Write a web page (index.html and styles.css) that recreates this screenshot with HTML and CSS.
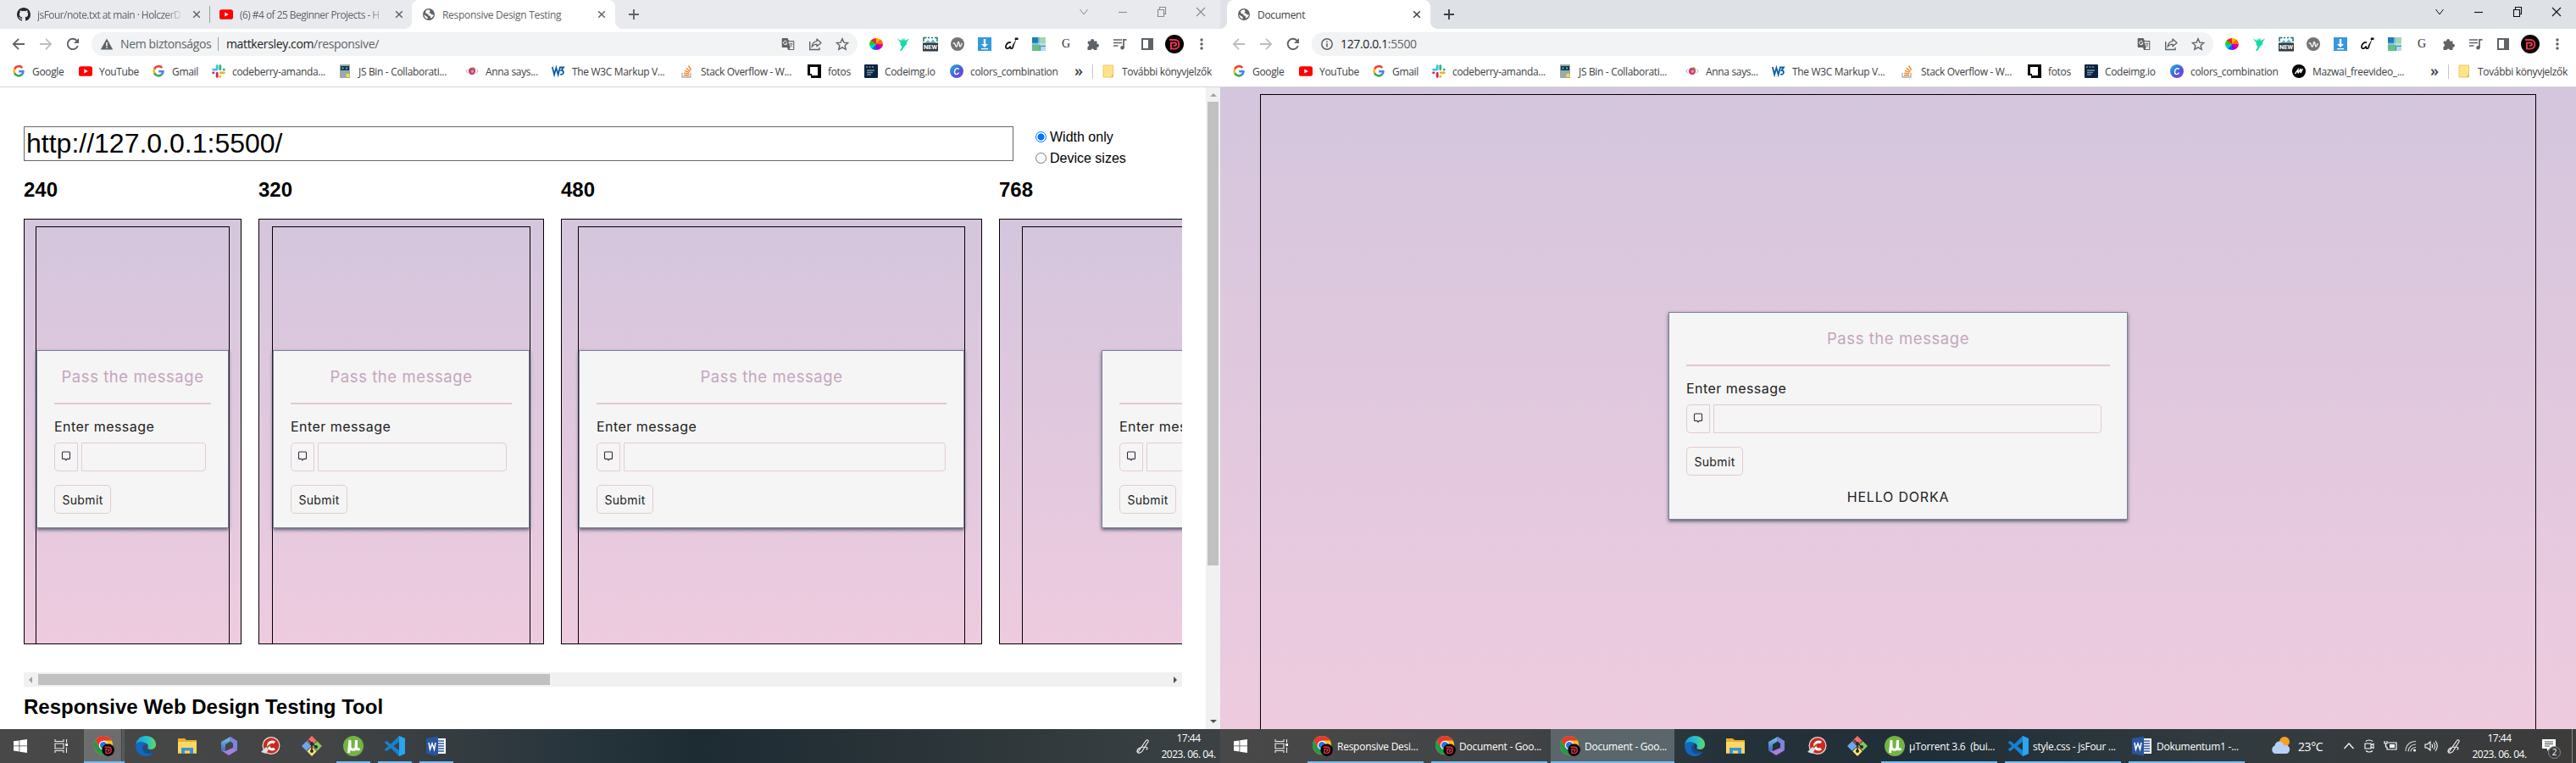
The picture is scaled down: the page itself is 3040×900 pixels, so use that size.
FILE: index.html
```html
<!DOCTYPE html>
<html lang="hu">
<head>
<meta charset="utf-8">
<title>Responsive Design Testing</title>
<link rel="stylesheet" href="styles.css">
</head>
<body>
<svg class="sprite" aria-hidden="true">
  <symbol id="github" viewBox="0 0 16 16"><path fill="#24292f" d="M8 0C3.58 0 0 3.58 0 8c0 3.54 2.29 6.53 5.47 7.59.4.07.55-.17.55-.38 0-.19-.01-.82-.01-1.49-2.01.37-2.53-.49-2.69-.94-.09-.23-.48-.94-.82-1.13-.28-.15-.68-.52-.01-.53.63-.01 1.08.58 1.23.82.72 1.21 1.87.87 2.33.66.07-.52.28-.87.51-1.07-1.78-.2-3.64-.89-3.64-3.95 0-.87.31-1.59.82-2.15-.08-.2-.36-1.02.08-2.12 0 0 .67-.21 2.2.82a7.6 7.6 0 0 1 4 0c1.53-1.04 2.2-.82 2.2-.82.44 1.1.16 1.92.08 2.12.51.56.82 1.27.82 2.15 0 3.07-1.87 3.75-3.65 3.95.29.25.54.73.54 1.48 0 1.07-.01 1.93-.01 2.2 0 .21.15.46.55.38A8 8 0 0 0 16 8c0-4.42-3.58-8-8-8z"/></symbol>
  <symbol id="youtube" viewBox="0 0 16 16"><rect y="2.2" width="16" height="11.6" rx="2.6" fill="#f00"/><path d="M6.3 5.4v5.2L10.8 8z" fill="#fff"/></symbol>
  <symbol id="globe" viewBox="0 0 16 16"><circle cx="8" cy="8" r="7" fill="#5f6368"/><path d="M8.600 2.200c-1.800 0-3.500.8-4.600 2.200l.6 2.400 2.600 1 .6 1.700 2 .3.200 2.600c2-.6 3.400-2 3.900-4l-2.200-.2-1.500-1.500-2.200-.4 1.700-1.600zM2.300 8.200c.2 2.600 1.800 4.600 4.200 5.300l.2-2.200-1.900-1.200z" fill="#fff"/></symbol>
  <symbol id="close" viewBox="0 0 16 16"><path d="m4.200 4.200 7.600 7.600m0-7.600-7.600 7.600" stroke="currentColor" stroke-width="1.500"/></symbol>
  <symbol id="plus" viewBox="0 0 16 16"><path d="M8 2v12M2 8h12" stroke="currentColor" stroke-width="1.900"/></symbol>
  <symbol id="back" viewBox="0 0 16 16"><path d="M15 8H2.200M8 1.800 1.800 8 8 14.200" fill="none" stroke="currentColor" stroke-width="1.800"/></symbol>
  <symbol id="forward" viewBox="0 0 16 16"><path d="M1 8h12.800M8 1.800 14.200 8 8 14.200" fill="none" stroke="currentColor" stroke-width="1.800"/></symbol>
  <symbol id="reload" viewBox="0 0 16 16"><path d="M13.800 10A6.200 6.200 0 1 1 12.400 3.600L14 5.400" fill="none" stroke="currentColor" stroke-width="1.900"/><path d="M15 1v6H9z" fill="currentColor"/></symbol>
  <symbol id="warning" viewBox="0 0 16 16"><path d="M8 1.500 15.200 14.500H.8z" fill="#5f6368"/><path d="M8 6v4.400M8 11.500v1.600" stroke="#fff" stroke-width="1.500"/></symbol>
  <symbol id="info" viewBox="0 0 16 16"><circle cx="8" cy="8" r="6.200" fill="none" stroke="#5f6368" stroke-width="1.500"/><path d="M8 7.200v4.200M8 4.400V6" stroke="#5f6368" stroke-width="1.600"/></symbol>
  <symbol id="translate" viewBox="0 0 16 16"><path d="M1 1h6.500L9 4h5.500c.5 0 .8.300.8.800v9.500c0 .5-.3.800-.8.800H8L7 12H1.500c-.5 0-.8-.3-.8-.8V1.800z" fill="#5f6368"/><path d="M9.500 5.200h4.700v8.700H9.700l1-1.900-2.300-7z" fill="#f1f3f4"/><path d="M9.500 7.500h4M11.500 6.500v1M10.300 8l2.700 3.500M13 8l-2.500 3.500" fill="none" stroke="#85888c"/><path d="M6.500 5A2.200 2.200 0 1 0 7 7H5" fill="none" stroke="#fff"/></symbol>
  <symbol id="share" viewBox="0 0 16 16"><path d="M1.700 5v9.500H13V12" fill="none" stroke="#5f6368" stroke-width="1.400"/><path d="M10 2l5 4.400-5 4.400V8.200C7 8.200 5.200 9.500 4 11.500 4.400 7.600 6.500 5 10 4.600z" fill="none" stroke="#5f6368" stroke-width="1.300" stroke-linejoin="round"/></symbol>
  <symbol id="star" viewBox="0 0 16 16"><path d="m8 1.700 1.900 4.400 4.800.4-3.600 3.200 1.100 4.700L8 11.900l-4.200 2.500 1.100-4.700L1.300 6.500l4.800-.4z" fill="none" stroke="#5f6368" stroke-width="1.400"/></symbol>
  <symbol id="hummingbird" viewBox="0 0 16 16"><path d="M1 1.500 5.500 4 7 1l.5 3L9 .5 10 4l5-2.500L12 6c.6 2-.2 3-2 4l-4 6H4l2.500-5C4.500 9 4 8 5 7z" fill="#15dda5"/></symbol>
  <symbol id="newshot" viewBox="0 0 18 18"><path d="M1 6V1.500h3.500M6 1.500h2M10 1.500h2M14 1.500h3V6" fill="none" stroke="#19756f" stroke-width="1.500"/><path d="M3 7.500 6 4l3 3 3-3.500 3.500 4z" fill="#5cbccb"/><rect y="7.500" width="18" height="10" fill="#303a43"/><path d="M0 0" /></symbol>
  <symbol id="wave" viewBox="0 0 16 16"><circle cx="8" cy="8" r="8" fill="#747474"/><path d="M2.800 7.500C5 4 5.500 12 7 11s.8-5.500 2-5.500 1 5.500 2 5.500 1.400-2 2.300-4" fill="none" stroke="#fff" stroke-width="1.300"/></symbol>
  <symbol id="download" viewBox="0 0 16 16"><path fill="#3698dc" d="M0 0h16v16H0z"/><path d="M6.800 2h2.400v6H12l-4 4-4-4h2.800zM4 13h8v1.200H4z" fill="#fff"/></symbol>
  <symbol id="brush" viewBox="0 0 16 16"><path d="M7 6.500C5 4.500.5 8 1 11.500 1.500 14.500 5 13 6.500 10.500c-.5 2.500.3 3 2 2.500" fill="none" stroke="#111" stroke-width="1.800"/><path d="m14 1-3.500 9c0 3-1.500 4-3.500 4 1.500-1 1.500-2 1.800-4.500z" fill="#111"/><path d="M12 .6h3.500v2.500h-4z" fill="#111"/></symbol>
  <symbol id="map" viewBox="0 0 16 16"><path fill="#2d97c7" d="M0 0h16v16H0z"/><path fill="#1d7ebb" d="M0 0h9v6H0z"/><path fill="#9fd7b6" d="M9 0h7v10H9z"/><path fill="#67bf86" d="M0 9h9v7H0z"/><path fill="#b4d8ee" d="M10 11h6v5h-6z"/><path d="M0 8h8V0M8 8h8" fill="none" stroke="#dceef3"/></symbol>
  <symbol id="puzzle" viewBox="0 0 16 16"><path d="M2 4.500h3.200a2 2 0 1 1 3.800 0h3.500v3.300a2 2 0 1 1 0 3.900V15H9.200a2 2 0 0 0-3.900 0H1.500v-3.800a2 2 0 0 0 0-3.900z" fill="#5f6368"/></symbol>
  <symbol id="playlist" viewBox="0 0 16 16"><path d="M0 3h10M0 6.500h10M0 10h5.500M12 12V2.800h3.500" fill="none" stroke="#5f6368" stroke-width="1.700"/><circle cx="10.500" cy="12.200" r="2.200" fill="#5f6368"/></symbol>
  <symbol id="panel" viewBox="0 0 16 16"><path fill="#5f6368" fill-rule="evenodd" d="M1 1h14v14H1zM3 3v10h6V3z"/></symbol>
  <symbol id="dee" viewBox="0 0 22 22"><circle cx="11" cy="11" r="11" fill="#080405"/><path d="M5 6h6.500c6.500 0 6.500 10.500 0 10.500H7V9.500h4c2.800 0 2.800 3.500 0 3.500h-1" fill="none" stroke="#e2354d" stroke-width="2"/></symbol>
  <symbol id="dots" viewBox="0 0 16 16"><g fill="#5f6368"><circle cx="8" cy="3" r="1.700"/><circle cx="8" cy="8" r="1.700"/><circle cx="8" cy="13" r="1.700"/></g></symbol>
  <symbol id="google" viewBox="0 0 16 16"><g fill="none" stroke-width="2.600"><path d="M12.300 4A5.400 5.400 0 0 0 3.200 5.600" stroke="#ea4335"/><path d="M3.200 5.500a5.400 5.400 0 0 0 0 5" stroke="#fbbc05"/><path d="M3.200 10.400a5.400 5.400 0 0 0 8.400 1.700" stroke="#34a853"/><path d="M11.500 12.200A5 5 0 0 0 13.400 8.200H8.200" stroke="#4285f4"/></g></symbol>
  <symbol id="slack" viewBox="0 0 16 16"><g stroke-width="2.800" stroke-linecap="round"><path d="M6.200 1.600v4M1.600 6.200h4" stroke="#36c5f0"/><path d="M9.800 1.600v4.200M14.400 6.200h-.2" stroke="#2eb67d"/><path d="M9.800 14.400v-.2M10.200 9.800h4.200" stroke="#ecb22e"/><path d="M6.200 14.400v-4M1.600 9.800h.4" stroke="#e01e5a"/></g></symbol>
  <symbol id="jsbin" viewBox="0 0 16 16"><path fill="#9aa9ad" d="M2 0h12v16H2z"/><path fill="#18343d" d="M3 2h10v5H3z"/><path fill="#36c7de" d="M4.500 3.500h2v2h-2zM9 3.500h2v2H9z"/><path fill="#f4db42" d="M9.500 11h4v4h-4z"/></symbol>
  <symbol id="anna" viewBox="0 0 16 16"><path d="M3 5.500.8 8 3 10.500M13 5.500 15.200 8 13 10.500" fill="none" stroke="#aaa"/><circle cx="8" cy="8" r="4.200" fill="#cf3f77"/><path d="M8 4c2-1 3 0 4 1-1 2-3 2-4 1z" fill="#9b7a38"/><circle cx="8.500" cy="8.300" r="1.500" fill="#eba0bb"/></symbol>
  <symbol id="w3" viewBox="0 0 16 16"><path d="m.8 3 2.300 9L5.400 4l2.300 8L10 3M9.500 3.500H14L11.500 7c4 0 2.700 6.200-1.500 4.500" fill="none" stroke="#0b5fa0" stroke-width="1.800"/></symbol>
  <symbol id="so" viewBox="0 0 16 16"><path d="M2 10v5h10v-5" fill="none" stroke="#aaa" stroke-width="1.300"/><path d="M4 12.700h6.200M4.200 10.300l6 .6M5 7.400l5.600 2M6.800 4.200l4.700 4M9.500 1.500l3.300 5.200" stroke="#f48024" stroke-width="1.400"/></symbol>
  <symbol id="fotos" viewBox="0 0 16 16"><path fill="#050505" fill-rule="evenodd" d="M0 0h16v16H4v-3H0zM3 3v8h2v2h7V3z"/></symbol>
  <symbol id="codeimg" viewBox="0 0 16 16"><rect width="16" height="16" rx="1" fill="#082440"/><path d="M2 3h2m1.500 0h2M9 3h2M3 7h9M3 9.500h7M3 12h5" stroke="#76909f" stroke-width="1.300"/></symbol>
  <symbol id="canva" viewBox="0 0 16 16"><linearGradient id="cg" x2="1" y2="1"><stop stop-color="#18b9d2"/><stop offset=".6" stop-color="#5354df"/><stop offset="1" stop-color="#8042df"/></linearGradient><circle cx="8" cy="8" r="8" fill="url(#cg)"/><path d="M10.500 5.700C9.500 3.500 5.500 5 5.500 8.700s3.500 3.800 5 1" fill="none" stroke="#fff" stroke-width="1.400"/></symbol>
  <symbol id="mazwai" viewBox="0 0 16 16"><circle cx="8" cy="8" r="8" fill="#000"/><path d="m3.500 11 3.500-5v4.500L10 5v5l2.500-5" fill="none" stroke="#fff" stroke-width="1.400"/></symbol>
  <symbol id="folder" viewBox="0 0 16 16"><path d="M2 1h11.500v14H2z" fill="#ffe38b" stroke="#edc95f"/><path d="m11 15 2.500-4v4z" fill="#e0b94b"/></symbol>
  <symbol id="w-down" viewBox="0 0 12 12"><path d="m1.500 3 4.500 6 4.500-6" fill="none" stroke="currentColor"/></symbol>
  <symbol id="w-min" viewBox="0 0 12 12"><path d="M1 6.500h10" stroke="currentColor" stroke-width="1.100"/></symbol>
  <symbol id="w-max" viewBox="0 0 12 12"><path d="M1.500 3.500h7v8h-7zM3.500 3.500v-3h7v8h-2" fill="none" stroke="currentColor" stroke-width="1.100"/></symbol>
  <symbol id="w-close" viewBox="0 0 12 12"><path d="m1 1 10 10m0-10L1 11" stroke="currentColor" stroke-width="1.100"/></symbol>
  <symbol id="bubble" viewBox="0 0 12 12"><path d="M2.500 1h7c.6 0 1 .4 1 1v6.400c0 .6-.4 1-1 1H7.200L6 10.800 4.800 9.400H2.500c-.6 0-1-.4-1-1V2c0-.6.4-1 1-1z" fill="none" stroke="#3b2a3f" stroke-width="1.100"/></symbol>
  <symbol id="win" viewBox="0 0 16 16"><path d="m0 2.300 6.500-.9v6.100H0zM7.300 1.300 16 0v7.500H7.300zM0 8.300h6.500v6.200L0 13.600zM7.300 8.300H16V16l-8.700-1.300z" fill="#fff"/></symbol>
  <symbol id="taskview" viewBox="0 0 16 16"><path d="M1 0v2.500h10V0M1 16v-2.500h10V16M1 5h10v6H1zM14.500 0v4M14.500 9.500V16" fill="none" stroke="#eee" stroke-width="1.100"/><path d="M13.300 5h2.700v3h-2.700z" fill="#fff"/></symbol>
  <symbol id="chrome" viewBox="0 0 26 26"><circle cx="12" cy="12" r="12" fill="#fbc116"/><path d="M1.600 6A12 12 0 0 1 22.400 6H12L6.800 15z" fill="#e33b2e"/><path d="M1.600 6 6.800 15l8.500 2-3.300 7A12 12 0 0 1 1.600 6z" fill="#229a47"/><circle cx="12" cy="12" r="5.700" fill="#fff"/><circle cx="12" cy="12" r="4.500" fill="#2a75e8"/><use href="#dee" x="10" y="10" width="16" height="16"/></symbol>
  <symbol id="edge" viewBox="0 0 24 24"><linearGradient id="eg" x2="1"><stop stop-color="#1b9de2"/><stop offset=".6" stop-color="#2bc3c8"/><stop offset="1" stop-color="#5fdc57"/></linearGradient><path d="M.3 10C1.500 3.500 6.500 0 12 0c7 0 12 4.500 12 10 0 4-3 6-6 6-2.500 0-4-1-3.500-2C16 10.500 13 8 9 8c-4 0-7.500 2-8.700 2z" fill="url(#eg)"/><path d="M.3 10C3 5.500 11 6.500 12.500 10 9 10 7 13 8.500 17c2 4.500 8.500 5 13 2C19 22.500 15.500 24 12 24 4 24-.8 17.500.3 10z" fill="#1168bd"/><path d="M8.500 17c-1-4 .5-7 4-7-3 4 0 9 9 9-4.500 3-11 2.500-13-2z" fill="#164e94"/></symbol>
  <symbol id="explorer" viewBox="0 0 24 24"><path d="M1 3h8l2 2h12v16H1z" fill="#e8ae2f"/><path d="M1 7h22v13H1z" fill="#ffd763"/><path d="M5 21v-7h14v7h-4v-3.500H9V21z" fill="#3496d5"/></symbol>
  <symbol id="m365" viewBox="0 0 24 24"><linearGradient id="mg" x2="0" y2="1"><stop stop-color="#72cced"/><stop offset="1" stop-color="#4057b7"/></linearGradient><path d="M14 1 3 7v10l5 3V10l5-3z" fill="url(#mg)"/><path d="m14 1 8 5v11l-5-3V9l-4-3z" fill="#7f83dc"/><path d="m3 17 5 1 9-4 5 3-10 6z" fill="#a480e0"/></symbol>
  <symbol id="cc" viewBox="0 0 24 24"><circle cx="13" cy="11.500" r="10.500" fill="#e6e1df"/><circle cx="13" cy="11.500" r="9.300" fill="#cb2920"/><path d="M17 8A4.500 4.500 0 1 0 17 15" fill="none" stroke="#fff" stroke-width="3.200"/><path d="m12 10-6 6" stroke="#a3642f" stroke-width="2"/><path d="m7 13 3 3-3 5-6-2z" fill="#d9dfe3"/></symbol>
  <symbol id="git" viewBox="0 0 24 24"><path d="m12 0 5.700 5.700L12 11.500 6.300 5.700z" fill="#f36f68"/><path d="m18.300 6.300 5.700 5.700-5.700 5.700-5.800-5.700z" fill="#86c95c"/><path d="m5.700 6.300 5.800 5.700-5.800 5.700L0 12z" fill="#6fa6ed"/><path d="m12 12.500 5.700 5.800L12 24l-5.700-5.700z" fill="#ffe276"/><path d="m8 5 4 4v9m0-9 5 4" fill="none" stroke="#2b2b2b" stroke-width="1.600"/><g fill="#2b2b2b"><circle cx="12" cy="9" r="2"/><circle cx="17" cy="13" r="2"/><circle cx="12" cy="18" r="2"/></g></symbol>
  <symbol id="ut" viewBox="0 0 24 24"><circle cx="12" cy="12" r="12" fill="#73b443"/><path d="M8 5 6.500 20M8 7v6c0 4 6 4.500 7 1l.5-9v9c0 2 2 2.500 4 1" fill="none" stroke="#fff" stroke-width="3"/></symbol>
  <symbol id="vs" viewBox="0 0 24 24"><path d="M17 0 24 3v18l-7 3L7 14.200 2.500 18 0 16.700v-1L4.500 12 0 8.300v-1L2.500 6 7 9.800zM17 7l-6.500 5 6.500 5z" fill="#1681cf"/><path d="m17 0 7 3v18l-7 3z" fill="#2ba5ed"/></symbol>
  <symbol id="word" viewBox="0 0 24 24"><path d="M11 3h12v18H11z" fill="#fff"/><path d="M14 6h7M14 9h7M14 12h7M14 15h7M14 18h7" stroke="#2b579a" stroke-width="1.300"/><path d="M0 3 14 .5v23L0 21z" fill="#28569d"/><path d="m3 8 1.500 8L7 9l2.500 7L11 8" fill="none" stroke="#fff" stroke-width="1.500"/></symbol>
  <symbol id="pen" viewBox="0 0 18 18"><path d="M3 16 12.500 2.500c1-1.500 3.300-.3 2.500 1.300L8 15c-2 2.500-6 3-6 .3 0-4 6-5.300 9-5.300 4 0 3.500 3 1.500 3" fill="none" stroke="#eee" stroke-width="1.200"/></symbol>
  <symbol id="weather" viewBox="0 0 24 24"><circle cx="16" cy="7" r="6" fill="#f8a01f"/><path d="M5 21a5 5 0 0 1-.5-9.500C5.500 5 14 5 15 11c5-1 8 3 7 6-.5 2.500-2 4-4 4z" fill="#b7d0f6"/></symbol>
  <symbol id="chev" viewBox="0 0 16 16"><path d="m2.500 11 5.500-6 5.500 6" fill="none" stroke="#fff" stroke-width="1.200"/></symbol>
  <symbol id="meet" viewBox="0 0 16 16"><path d="M3 5h7v6H3zM10 7l3-1.500v5L10 9M4 2.500c2-2 6-2 8 0M4 13.500c2 2 6 2 8 0" fill="none" stroke="#fff" stroke-width="1.100"/></symbol>
  <symbol id="battery" viewBox="0 0 16 16"><path d="M5 4h10v8H4V9M1 2v3h3V2M2.500 5v4H4" fill="none" stroke="#fff" stroke-width="1.200"/><path d="M7 6h6v4H7z" fill="#fff"/></symbol>
  <symbol id="wifi" viewBox="0 0 16 16"><path d="M2 14C2 7 7 2.500 14 2.500M5 14.500c0-5 4-8.500 9-8.500M8 14.500c0-3 2.500-5 6-5" fill="none" stroke="#ddd" stroke-width="1.100"/><circle cx="12.500" cy="13" r="1.500" fill="#fff"/></symbol>
  <symbol id="sound" viewBox="0 0 16 16"><path d="M1 6h2.500L7 3v10L3.500 10H1zM9 6c1 1.200 1 2.800 0 4M11 4c2 2.300 2 5.700 0 8M13 2c3 3.500 3 8.500 0 12" fill="none" stroke="#fff" stroke-width="1.100"/></symbol>
  <symbol id="note" viewBox="0 0 16 16"><path d="M0 1h16v11H9l-3 3v-3H0z" fill="#fff"/><path d="M3 4h10M3 6.500h10M3 9h6" stroke="#3c4246" stroke-width="1"/></symbol>
</svg>

<div class="desktop">
  <section class="monitor left">
    <div class="tabs">
      <div class="tab t1"><svg><use href="#github"/></svg><span class="fade">jsFour/note.txt at main · HolczerD</span><svg><use href="#close"/></svg></div>
      <div class="tab t2"><svg><use href="#youtube"/></svg><span class="fade">(6) #4 of 25 Beginner Projects - H</span><svg><use href="#close"/></svg></div>
      <div class="tab active"><svg><use href="#globe"/></svg><span>Responsive Design Testing</span><svg><use href="#close"/></svg></div>
      <svg class="plus"><use href="#plus"/></svg>
      <div class="controls"><svg><use href="#w-down"/></svg><svg><use href="#w-min"/></svg><svg><use href="#w-max"/></svg><svg><use href="#w-close"/></svg></div>
    </div>
    <div class="toolbar">
      <div class="nav"><svg><use href="#back"/></svg><svg class="off"><use href="#forward"/></svg><svg><use href="#reload"/></svg></div>
      <div class="address"><svg><use href="#warning"/></svg><span class="insecure">Nem biztonságos</span><span class="url"><b>mattkersley.com</b>/responsive/</span>
        <div class="pill-icons"><svg><use href="#translate"/></svg><svg><use href="#share"/></svg><svg><use href="#star"/></svg></div></div>
      <div class="exts"><i class="wheel"></i><svg><use href="#hummingbird"/></svg><span class="shot"><svg><use href="#newshot"/></svg><em>NEW</em></span><svg><use href="#wave"/></svg><svg><use href="#download"/></svg><svg><use href="#brush"/></svg><svg><use href="#map"/></svg><span class="gee">G</span><svg><use href="#puzzle"/></svg><svg><use href="#playlist"/></svg><svg><use href="#panel"/></svg><svg class="avatar"><use href="#dee"/></svg><svg><use href="#dots"/></svg></div>
    </div>
    <div class="bookmarks">
      <a><svg><use href="#google"/></svg><span>Google</span></a><a><svg><use href="#youtube"/></svg><span>YouTube</span></a><a><svg><use href="#google"/></svg><span>Gmail</span></a><a><svg><use href="#slack"/></svg><span>codeberry-amanda...</span></a><a><svg><use href="#jsbin"/></svg><span>JS Bin - Collaborati...</span></a><a><svg><use href="#anna"/></svg><span>Anna says...</span></a><a><svg><use href="#w3"/></svg><span>The W3C Markup V...</span></a><a><svg><use href="#so"/></svg><span>Stack Overflow - W...</span></a><a><svg><use href="#fotos"/></svg><span>fotos</span></a><a><svg><use href="#codeimg"/></svg><span>Codeimg.io</span></a><a><svg><use href="#canva"/></svg><span>colors_combination</span></a>
      <div class="more"><span class="raquo">»</span><a><svg><use href="#folder"/></svg><span>További könyvjelzők</span></a></div>
    </div>
    <div class="page tester">
      <div class="tester-body">
        <div class="form-row">
          <div class="url-input">http://127.0.0.1:5500/</div>
          <div class="radios"><label><i class="radio on"></i>Width only</label><label><i class="radio"></i>Device sizes</label></div>
        </div>
        <div class="frames">
          <div class="frame f240"><h2>240</h2><div class="view"><div class="outline"><div class="card"><h3>Pass the message</h3><hr><p>Enter message</p><div class="field"><span class="ico"><svg><use href="#bubble"/></svg></span><span class="box"></span></div><span class="submit">Submit</span></div></div></div></div>
          <div class="frame f320"><h2>320</h2><div class="view"><div class="outline"><div class="card"><h3>Pass the message</h3><hr><p>Enter message</p><div class="field"><span class="ico"><svg><use href="#bubble"/></svg></span><span class="box"></span></div><span class="submit">Submit</span></div></div></div></div>
          <div class="frame f480"><h2>480</h2><div class="view"><div class="outline"><div class="card"><h3>Pass the message</h3><hr><p>Enter message</p><div class="field"><span class="ico"><svg><use href="#bubble"/></svg></span><span class="box"></span></div><span class="submit">Submit</span></div></div></div></div>
          <div class="frame f768"><h2>768</h2><div class="view"><div class="outline"><div class="card"><h3>Pass the message</h3><hr><p>Enter message</p><div class="field"><span class="ico"><svg><use href="#bubble"/></svg></span><span class="box"></span></div><span class="submit">Submit</span></div></div></div></div>
        </div>
        <div class="hscroll"><i class="arrow-l"></i><i class="hthumb"></i><i class="arrow-r"></i></div>
        <h1>Responsive Web Design Testing Tool</h1>
      </div>
      <div class="vscroll"><i class="arrow-u"></i><i class="vthumb"></i><i class="arrow-d"></i></div>
    </div>
    <div class="taskbar">
      <span class="tb"><svg class="s16"><use href="#win"/></svg></span><span class="tb"><svg class="s16"><use href="#taskview"/></svg></span><span class="tb current"><svg><use href="#chrome"/></svg></span><span class="tb"><svg><use href="#edge"/></svg></span><span class="tb"><svg><use href="#explorer"/></svg></span><span class="tb"><svg><use href="#m365"/></svg></span><span class="tb"><svg><use href="#cc"/></svg></span><span class="tb"><svg><use href="#git"/></svg></span><span class="tb run"><svg><use href="#ut"/></svg></span><span class="tb run"><svg><use href="#vs"/></svg></span><span class="tb run"><svg><use href="#word"/></svg></span>
      <div class="tray"><svg class="pen"><use href="#pen"/></svg><div class="clock"><span>17:44</span><span>2023. 06. 04.</span></div></div>
    </div>
  </section>

  <section class="monitor right">
    <div class="tabs">
      <div class="tab active"><svg><use href="#globe"/></svg><span>Document</span><svg><use href="#close"/></svg></div>
      <svg class="plus"><use href="#plus"/></svg>
      <div class="controls"><svg><use href="#w-down"/></svg><svg><use href="#w-min"/></svg><svg><use href="#w-max"/></svg><svg><use href="#w-close"/></svg></div>
    </div>
    <div class="toolbar">
      <div class="nav"><svg class="off"><use href="#back"/></svg><svg class="off"><use href="#forward"/></svg><svg><use href="#reload"/></svg></div>
      <div class="address"><svg><use href="#info"/></svg><span class="url"><b>127.0.0.1</b>:5500</span>
        <div class="pill-icons"><svg><use href="#translate"/></svg><svg><use href="#share"/></svg><svg><use href="#star"/></svg></div></div>
      <div class="exts"><i class="wheel"></i><svg><use href="#hummingbird"/></svg><span class="shot"><svg><use href="#newshot"/></svg><em>NEW</em></span><svg><use href="#wave"/></svg><svg><use href="#download"/></svg><svg><use href="#brush"/></svg><svg><use href="#map"/></svg><span class="gee">G</span><svg><use href="#puzzle"/></svg><svg><use href="#playlist"/></svg><svg><use href="#panel"/></svg><svg class="avatar"><use href="#dee"/></svg><svg><use href="#dots"/></svg></div>
    </div>
    <div class="bookmarks">
      <a><svg><use href="#google"/></svg><span>Google</span></a><a><svg><use href="#youtube"/></svg><span>YouTube</span></a><a><svg><use href="#google"/></svg><span>Gmail</span></a><a><svg><use href="#slack"/></svg><span>codeberry-amanda...</span></a><a><svg><use href="#jsbin"/></svg><span>JS Bin - Collaborati...</span></a><a><svg><use href="#anna"/></svg><span>Anna says...</span></a><a><svg><use href="#w3"/></svg><span>The W3C Markup V...</span></a><a><svg><use href="#so"/></svg><span>Stack Overflow - W...</span></a><a><svg><use href="#fotos"/></svg><span>fotos</span></a><a><svg><use href="#codeimg"/></svg><span>Codeimg.io</span></a><a><svg><use href="#canva"/></svg><span>colors_combination</span></a><a><svg><use href="#mazwai"/></svg><span>Mazwai_freevideo_...</span></a>
      <div class="more"><span class="raquo">»</span><a><svg><use href="#folder"/></svg><span>További könyvjelzők</span></a></div>
    </div>
    <div class="page document">
      <div class="outline"><div class="card"><h3>Pass the message</h3><hr><p>Enter message</p><div class="field"><span class="ico"><svg><use href="#bubble"/></svg></span><span class="box"></span></div><span class="submit">Submit</span><div class="output">HELLO DORKA</div></div></div>
    </div>
    <div class="taskbar">
      <span class="tb"><svg class="s16"><use href="#win"/></svg></span><span class="tb"><svg class="s16"><use href="#taskview"/></svg></span>
      <span class="task k1"><svg><use href="#chrome"/></svg>Responsive Desi...</span><span class="task k2"><svg><use href="#chrome"/></svg>Document - Goo...</span><span class="task k3"><svg><use href="#chrome"/></svg>Document - Goo...</span>
      <span class="tb"><svg><use href="#edge"/></svg></span><span class="tb"><svg><use href="#explorer"/></svg></span><span class="tb"><svg><use href="#m365"/></svg></span><span class="tb"><svg><use href="#cc"/></svg></span><span class="tb"><svg><use href="#git"/></svg></span>
      <span class="task k4"><svg><use href="#ut"/></svg>µTorrent 3.6&nbsp; (bui...</span><span class="task k5"><svg><use href="#vs"/></svg>style.css - jsFour ...</span><span class="task k6"><svg><use href="#word"/></svg>Dokumentum1 -...</span>
      <div class="tray"><svg class="weather"><use href="#weather"/></svg><span class="temp">23°C</span><div class="status"><svg><use href="#chev"/></svg><svg><use href="#meet"/></svg><svg><use href="#battery"/></svg><svg><use href="#wifi"/></svg><svg><use href="#sound"/></svg></div><svg class="pen"><use href="#pen"/></svg><div class="clock"><span>17:44</span><span>2023. 06. 04.</span></div><div class="notes"><svg><use href="#note"/></svg><span class="badge">2</span></div></div>
    </div>
  </section>
</div>
</body>
</html>
```

FILE: styles.css
```css
* { box-sizing: border-box; }
body { margin: 0; width: 3040px; height: 900px; overflow: hidden; font-family: "Open Sans", "Noto Sans", sans-serif; }
.sprite { position: absolute; width: 0; height: 0; }
svg { display: block; flex: none; width: 16px; height: 16px; }
.desktop { display: flex; height: 900px; }
.monitor { display: flex; flex-direction: column; flex: none; background: #fff; }
.left { width: 1440px; }
.right { width: 1600px; }

/* Tab strip */
.tabs { display: flex; height: 34px; flex: none; background: #e8eaed; color: #5f6368; font-size: 12px; letter-spacing: -.3px; }
.right .tabs { background: #dee1e6; padding-left: 8px; color: #3c4043; }
.tab { display: flex; align-items: center; gap: 8px; padding-right: 8px; white-space: nowrap; }
.tab span { flex: 1; }
.tab .fade { letter-spacing: -.55px; -webkit-mask-image: linear-gradient(to right, #000 88%, transparent); mask-image: linear-gradient(to right, #000 88%, transparent); }
.t1 { width: 248px; padding-left: 20px; background: linear-gradient(#9a9da1, #9a9da1) right 0 center / 1px 20px no-repeat; }
.t2 { width: 238px; padding-left: 11px; padding-right: 7px; }
.tab.active { width: 240px; padding-left: 12px; background: #fff; border-radius: 8px 8px 0 0; position: relative; }
.tab.active::before, .tab.active::after { content: ""; position: absolute; bottom: 0; width: 8px; height: 8px; }
.tab.active::before { left: -8px; background: radial-gradient(circle at 0 0, transparent 7.5px, #fff 8px); }
.tab.active::after { right: -8px; background: radial-gradient(circle at 100% 0, transparent 7.5px, #fff 8px); }
.plus { margin: 9px 0 0 14px; }
.controls { display: flex; margin-left: auto; height: 28px; align-items: center; color: #888b8f; }
.right .controls { color: #111; }
.controls svg { width: 12px; height: 12px; margin: 0 17px; }

/* Toolbar */
.toolbar { display: flex; align-items: center; height: 36px; flex: none; color: #5f6368; }
.nav { display: flex; width: 108px; padding-left: 14px; gap: 16px; }
.off { color: #bcbec1; }
.address { display: flex; flex: 1; align-items: center; height: 28px; border-radius: 14px; background: #f1f3f4; padding: 0 10px; font-size: 14px; letter-spacing: -.36px; }
.insecure { width: 116px; margin-left: 8px; white-space: nowrap; border-right: 1px solid #9aa0a6; line-height: 16px; }
.insecure + .url { margin-left: 9px; }
.url { margin-left: 8px; line-height: 20px; }
.url b { font-weight: 400; color: #202124; }
.pill-icons { display: flex; gap: 16px; margin-left: auto; }
.exts { display: flex; align-items: center; width: 428px; padding-left: 14px; gap: 16px; }
.shot { position: relative; flex: none; width: 18px; height: 18px; margin: 0 -1px; }
.shot svg { width: 18px; height: 18px; }
.shot em { position: absolute; left: 0; right: 0; top: 8px; text-align: center; color: #fff; font: 700 7.500px/10px Roboto, sans-serif; letter-spacing: 0; }
.exts .avatar { width: 22px; height: 22px; margin: 0 -3px; }
.wheel { width: 16px; height: 14px; flex: none; border-radius: 50%; background: conic-gradient(#ffb000 0 12%, #ff6a00 0 25%, #e6009b 0 37%, #a000e0 0 50%, #0067e8 0 62%, #00cbe8 0 72%, #18d400 0 85%, #f22 0); }
.gee { width: 16px; text-align: center; color: #333; font: 14px "Liberation Serif", serif; }

/* Bookmarks */
.bookmarks { display: flex; height: 33px; flex: none; padding: 0 10px 4px 14px; align-items: center; border-bottom: 1px solid #d4d5d8; font-size: 12px; letter-spacing: -.33px; color: #3c4043; }
.bookmarks a { display: flex; align-items: center; gap: 8px; white-space: nowrap; flex: none; }
.bookmarks > a:nth-child(1) { width: 79px; }
.bookmarks > a:nth-child(2) { width: 86px; }
.bookmarks > a:nth-child(3) { width: 71px; }
.bookmarks > a:nth-child(4) { width: 149px; }
.bookmarks > a:nth-child(5) { width: 150px; }
.bookmarks > a:nth-child(6) { width: 102px; }
.bookmarks > a:nth-child(7) { width: 152px; }
.bookmarks > a:nth-child(8) { width: 150px; }
.bookmarks > a:nth-child(9) { width: 67px; }
.bookmarks > a:nth-child(10) { width: 101px; }
.bookmarks > a:nth-child(11) { width: 144px; }
.more { display: flex; margin-left: auto; width: 163px; align-items: center; }
.raquo { width: 22px; padding-left: 1px; font-size: 18px; font-weight: 600; line-height: 16px; padding-bottom: 2px; }
.more a { border-left: 1px solid #c4c7ca; padding-left: 10px; }

/* Responsive tester */
.page { height: 757px; flex: none; }
.tester { display: flex; font-family: "Liberation Sans", Arial, sans-serif; color: #000; }
.tester-body { width: 1423px; padding: 46px 28px 0; }
.form-row { display: flex; height: 50px; }
.url-input { width: 1168px; height: 41px; border: 1px solid #666; padding: 1px 2px; font-size: 32px; line-height: 37px; }
.radios { padding: 0 0 0 26px; font-size: 16px; }
.radios label { display: flex; align-items: center; height: 25px; gap: 4px; }
.radio { width: 13px; height: 13px; border: 1px solid #767676; border-radius: 50%; }
.radio.on { border-color: #0075ff; background: radial-gradient(circle, #0075ff 3.800px, #fff 4.300px); }
.frames { display: flex; gap: 20px; width: 1367px; overflow: hidden; height: 594px; }
.frame { flex: none; }
h2 { margin: 0; height: 59px; padding-top: 11px; font-size: 24px; line-height: 28px; }
.view { height: 502px; border: 1px solid #000; background: linear-gradient(#d4c6dd, #eecbdf); padding-top: 8px; }
.f240 .view { width: 257px; padding-left: 13px; padding-right: 13px; }
.f320 .view { width: 337px; padding-left: 15px; padding-right: 15px; }
.f480 .view { width: 497px; padding-left: 19px; padding-right: 19px; }
.f768 .view { width: 785px; padding-left: 26px; padding-right: 26px; }
.outline { height: 100%; border: 1px solid #000; border-bottom: 0; padding-top: 145px; }
.f768 .card { margin: 0 93px; }
.hscroll { display: flex; width: 1367px; height: 17px; background: #f1f1f1; align-items: center; }
.hthumb { width: 604px; height: 13px; background: #c1c1c1; }
.arrow-l { margin: 0 7px 0 6px; border: 4px solid transparent; border-left: 0; border-right-color: #a3a3a3; }
.arrow-r { margin: 0 6px 0 auto; border: 4px solid transparent; border-right: 0; border-left-color: #505050; }
h1 { margin: 10px 0 0; font-size: 24px; line-height: 28px; white-space: nowrap; }
.vscroll { display: flex; flex-direction: column; align-items: center; width: 17px; background: #f1f1f1; }
.vthumb { width: 13px; height: 547px; background: #c1c1c1; }
.arrow-u { margin: 7px 0 6px; border: 4px solid transparent; border-top: 0; border-bottom-color: #a3a3a3; }
.arrow-d { margin: auto 0 7px; border: 4px solid transparent; border-bottom: 0; border-top-color: #505050; }

/* Message card */
.card { height: 210px; padding: 0 20px; border: 1px solid #7c8296; background: #f5f5f5; box-shadow: 0 2px 4px #555b70; font-family: Inter, "Open Sans", sans-serif; color: #222; }
h3 { margin: 0; height: 61px; padding-top: 18px; text-align: center; font-size: 18.500px; line-height: 24px; font-weight: 400; color: #c5a5bd; white-space: nowrap; letter-spacing: .57px; }
hr { margin: 0; border: 0; height: 2px; background: #e4c6d0; }
.card p { margin: 0; height: 45px; padding-top: 14px; font-size: 16px; line-height: 24px; white-space: nowrap; letter-spacing: .45px; }
.field { display: flex; height: 34px; gap: 4px; padding-right: 6px; }
.f480 .field { padding-right: 1px; }
.document .field { padding-right: 10px; }
.ico { display: grid; place-items: center; width: 28px; border: 1px solid #e6cad3; border-radius: 5px 0 0 5px; }
.ico svg { width: 12px; height: 12px; margin-bottom: 2px; }
.box { flex: 1; border: 1px solid #e6cad3; border-radius: 0 4px 4px 0; }
.submit { display: grid; place-items: center; width: 67px; height: 34px; margin-top: 16px; border: 1px solid #e6cad3; border-radius: 5px; font-size: 14px; letter-spacing: .35px; }
.document { padding: 8px 47px 0; background: linear-gradient(#d4c6dd, #eecbdf); }
.document .outline { padding-top: 256px; }
.document .card { width: 542px; height: 245px; margin: 0 auto; }
.output { margin-top: 13px; text-align: center; font-size: 16px; line-height: 24px; letter-spacing: .8px; }

/* Taskbar */
.taskbar { display: flex; height: 40px; flex: none; color: #fff; font-size: 12px; background: linear-gradient(90deg, #494848, #424445 27%, #26343c 48%, #1d2b33 57%, #2c3539 78%, #3c4244); }
.right .taskbar { background: linear-gradient(90deg, #494848, #424445 22%, #25323a 37%, #202e37 52%, #303a3f 72%, #3d3c3b); }
.taskbar svg { width: 24px; height: 24px; }
.taskbar .s16 { width: 16px; height: 16px; }
.tb { display: grid; place-items: center; width: 48px; height: 40px; flex: none; }
.left .tb + .tb { margin-left: 1px; }
.left .tb:nth-child(2) { margin-left: 0; }
.left .tb.current { margin-left: 3px; margin-right: 0; background: linear-gradient(#76b9ed, #76b9ed) bottom / 100% 2px no-repeat, linear-gradient(90deg, #6d6d6d 92%, #414141 92%, #414141 94%, #5a5a5a 94%); }
.tb.run { background: linear-gradient(#76b9ed, #76b9ed) bottom / 40px 2px no-repeat; }
.task { display: flex; align-items: center; flex: none; width: 137px; padding-left: 4px; gap: 5px; border-bottom: 2px solid #76b9ed; padding-top: 2px; white-space: nowrap; letter-spacing: -.25px; }
.k1 { margin-left: 7px; padding-left: 6px; }
.k2 { margin-left: 9px; padding-left: 5px; gap: 4px; }
.k3 { margin-left: 4px; width: 146px; padding-left: 11px; background: #5a666b; }
.k4 { margin-left: 4px; }
.k5, .k6 { margin-left: 9px; }
.tray { display: flex; align-items: center; margin-left: auto; }
.taskbar .pen { width: 18px; height: 18px; margin-right: 13px; }
.clock { display: flex; flex-direction: column; align-items: center; width: 63px; margin-right: 6px; line-height: 19px; letter-spacing: -.5px; white-space: nowrap; }
.temp { width: 58px; padding-left: 8px; font-size: 14px; letter-spacing: -.4px; }
.status { display: flex; gap: 8.300px; width: 125px; padding-left: 2px; }
.taskbar .status svg { width: 16px; height: 16px; }
.notes { width: 53px; padding-left: 13px; position: relative; height: 40px; padding-top: 11px; background: linear-gradient(#888, #888) right 4px top / 1px 100% no-repeat; }
.taskbar .notes svg { width: 16px; height: 16px; }
.badge { position: absolute; left: 20px; top: 20px; width: 15px; height: 15px; border-radius: 50%; border: 1px solid #8b8e90; background: #393c3e; text-align: center; font-size: 10px; line-height: 13px; }
```
